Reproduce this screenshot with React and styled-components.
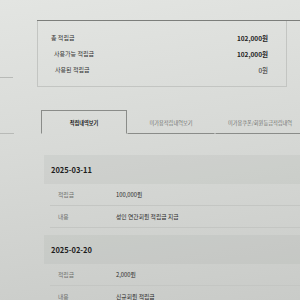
import React from "react";
import styled, { createGlobalStyle } from "styled-components";

const Global = createGlobalStyle`
  html, body {
    margin: 0;
    padding: 0;
  }
  body {
    width: 300px;
    height: 300px;
    overflow: hidden;
    background: linear-gradient(172deg, #e3e5e2 0%, #d8dad7 45%, #c9cbc8 100%);
    font-family: "Noto Sans CJK KR", "Noto Sans", sans-serif;
    color: #222;
  }
`;

const Page = styled.div`
  width: 300px;
  height: 300px;
  padding-top: 20px;
  box-sizing: border-box;
`;

const Summary = styled.section`
  margin-left: 37px;
  border-top: 1px solid #7c7e7b;
`;

const SummaryBox = styled.div`
  width: 250px;
  height: 66px;
  box-sizing: border-box;
  border: 1px solid #c3c5c2;
  border-top: none;
  padding: 10px 18px 0 13px;
  display: flex;
  flex-direction: column;
  gap: 3px;
`;

const SummaryRow = styled.div`
  display: flex;
  justify-content: space-between;
  align-items: center;
  height: 13px;
  font-size: 6px;
`;

const SummaryLabel = styled.span`
  color: #333;
  padding-left: ${(p) => p.$indent || 0}px;
`;

const SummaryValue = styled.span`
  font-weight: ${(p) => (p.$bold ? 700 : 400)};
  font-size: 6.5px;
  color: #1e1e1e;
`;

const Rule = styled.div`
  width: ${(p) => p.$w}px;
  height: 1px;
  background: #b8bab7;
  margin-top: ${(p) => p.$top}px;
`;

const Tabs = styled.nav`
  display: flex;
  align-items: flex-end;
  margin-top: ${(p) => p.$top}px;
  height: 24px;
`;

const TabGutter = styled.div`
  width: 14px;
  margin-right: 27px;
  flex-shrink: 0;
  border-bottom: 1px solid #b8bab7;
`;

const Tab = styled.div`
  width: ${(p) => p.$w}px;
  height: 24px;
  flex-shrink: 0;
  box-sizing: border-box;
  display: flex;
  align-items: center;
  justify-content: center;
  font-size: 5.2px;
  white-space: nowrap;
  color: ${(p) => (p.$active ? "#222" : "#6f716e")};
  font-weight: ${(p) => (p.$active ? 700 : 400)};
  border: 1px solid ${(p) => (p.$active ? "#8a8c89" : "transparent")};
  border-bottom: 1px solid ${(p) => (p.$active ? "transparent" : "#8a8c89")};
`;

const List = styled.div`
  margin: 21px 0 0 44px;
`;

const DateBand = styled.div`
  height: 29px;
  display: flex;
  align-items: center;
  padding-left: 7px;
  background: rgba(150, 154, 150, 0.12);
  font-size: 7.5px;
  font-weight: 700;
  color: #1c1c1c;
  margin-top: ${(p) => p.$top || 0}px;
`;

const DetailRow = styled.div`
  height: 21px;
  display: flex;
  align-items: center;
  border-bottom: 1px solid #c4c6c3;
  margin-left: 6px;
  font-size: 5.8px;
`;

const DetailLabel = styled.span`
  width: 58px;
  color: #6e706d;
  padding-left: 8px;
`;

const DetailValue = styled.span`
  color: #2a2a2a;
`;

const summary = [
  { label: "총 적립금", value: "102,000원", bold: true, indent: 0 },
  { label: "사용가능 적립금", value: "102,000원", bold: true, indent: 3 },
  { label: "사용된 적립금", value: "0원", bold: false, indent: 4 },
];

const entries = [
  { date: "2025-03-11", amount: "100,000원", memo: "성인 연간회원 적립금 지급" },
  { date: "2025-02-20", amount: "2,000원", memo: "신규회원 적립금" },
];

export default function App() {
  return (
    <Page>
      <Global />
      <Summary>
        <SummaryBox>
          {summary.map((s) => (
            <SummaryRow key={s.label}>
              <SummaryLabel $indent={s.indent}>{s.label}</SummaryLabel>
              <SummaryValue $bold={s.bold}>{s.value}</SummaryValue>
            </SummaryRow>
          ))}
        </SummaryBox>
      </Summary>
      <Rule $w={13} $top={-10} />
      <Tabs $top={32}>
        <TabGutter />
        <Tab $active $w={86}>적립내역보기</Tab>
        <Tab $w={88}>미가용적립내역보기</Tab>
        <Tab $w={90}>미가용쿠폰/회원등급적립내역</Tab>
      </Tabs>
      <List>
        {entries.map((e, i) => (
          <div key={e.date}>
            <DateBand $top={i ? 7 : 0}>{e.date}</DateBand>
            <DetailRow>
              <DetailLabel>적립금</DetailLabel>
              <DetailValue>{e.amount}</DetailValue>
            </DetailRow>
            <DetailRow>
              <DetailLabel>내용</DetailLabel>
              <DetailValue>{e.memo}</DetailValue>
            </DetailRow>
          </div>
        ))}
      </List>
    </Page>
  );
}
